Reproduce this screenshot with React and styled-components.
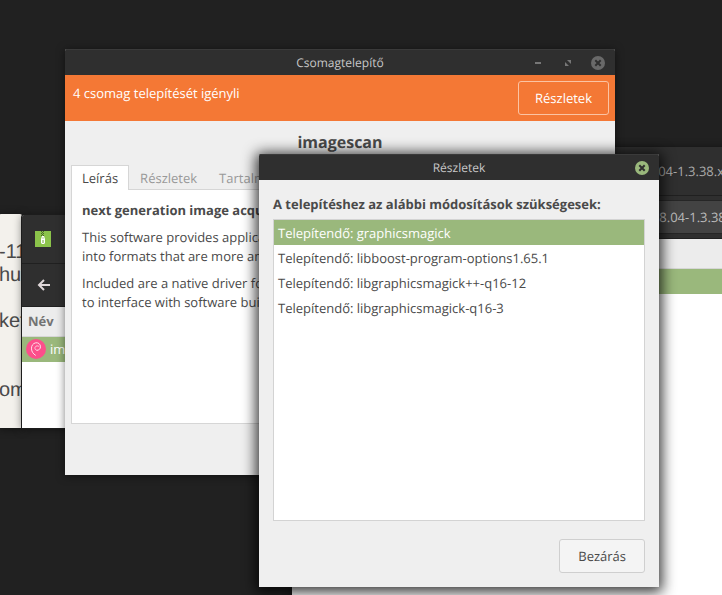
import React from "react";
import styled, { createGlobalStyle, css } from "styled-components";

const GlobalStyle = createGlobalStyle`
  * {
    box-sizing: border-box;
  }

  body {
    margin: 0;
    font-family: "Open Sans", "Noto Sans", sans-serif;
    font-size: 13px;
    line-height: 19px;
    text-rendering: geometricPrecision;
    color: #4a4a4a;
  }
`;

const Desktop = styled.main`
  position: relative;
  height: 100vh;
  overflow: hidden;
  background: #212121;
`;

const Window = styled.section`
  position: absolute;
  left: ${(props) => props.$x}px;
  top: ${(props) => props.$y}px;
  width: ${(props) => props.$width}px;
  height: ${(props) => props.$height}px;
  display: flex;
  flex-direction: column;
  overflow: hidden;
  border-radius: 2px 2px 0 0;
  background: ${(props) => props.$background || "#efefef"};
  box-shadow: ${(props) =>
    props.$active
      ? "0 2px 14px 3px rgba(0, 0, 0, 0.8)"
      : "0 1px 8px rgba(0, 0, 0, 0.5)"};
`;

const OutlinedWindow = styled(Window)`
  outline: 1px solid #1c1c1c;
`;

const PaperText = styled.p`
  margin: 0;
  padding: 27px 0 0;
  font-family: "Liberation Sans", Arial, sans-serif;
  font-size: 20px;
  line-height: 23px;
  white-space: pre;
`;

const TitleBar = styled.header`
  display: grid;
  grid-template-columns: 1fr auto 1fr;
  align-items: center;
  flex: none;
  height: 26px;
  padding: 0 10px;
  border-top: 1px solid #3a3a3a;
  background: #2f2f2f;
`;

const WindowTitle = styled.h1`
  grid-column: 2;
  margin: 0;
  font-size: 12px;
  font-weight: 400;
  color: #c8c8c8;
`;

const WindowControls = styled.div`
  display: flex;
  justify-content: flex-end;
  gap: 16px;
`;

const ControlButton = styled.button`
  display: flex;
  width: 14px;
  height: 14px;
  padding: 0;
  border: 0;
  background: none;
`;

const Notice = styled.div`
  display: flex;
  justify-content: space-between;
  align-items: flex-start;
  flex: none;
  height: 46px;
  padding: 6px;
  background: #f47835;
  color: #fff;
`;

const NoticeText = styled.span`
  padding: 3px 2px;
`;

const Button = styled.button`
  height: 34px;
  padding: 0 ${(props) => (props.$light ? 16 : 18)}px;
  border: 1px solid #cfcfcf;
  border-radius: 3px;
  background: #f4f4f4;
  font: inherit;
  text-rendering: inherit;
  color: #4a4a4a;

  ${(props) =>
    props.$light &&
    css`
      border-color: #fbc3a3;
      background: transparent;
      color: #fff;
    `}
`;

const PackageBody = styled.div`
  display: flex;
  flex-direction: column;
  flex: 1;
  padding: 10px 6px 51px;
`;

const PackageName = styled.h2`
  margin: 0 0 12px;
  font-size: 16px;
  line-height: 22px;
  text-align: center;
`;

const Tabs = styled.div`
  display: flex;
  flex: none;
  height: 24px;
`;

const Tab = styled.button`
  margin-bottom: -1px;
  padding: 0 10px;
  border: 1px solid ${(props) => (props.$active ? "#d6d6d6" : "transparent")};
  border-bottom: 0;
  background: ${(props) => (props.$active ? "#fff" : "none")};
  font: inherit;
  text-rendering: inherit;
  color: ${(props) => (props.$active ? "#4a4a4a" : "#999")};
  z-index: ${(props) => (props.$active ? 1 : 0)};
`;

const TabPanel = styled.div`
  flex: 1;
  padding: 11px 10px;
  border: 1px solid #d6d6d6;
  background: #fff;

  p {
    margin: 0 0 8px;
    white-space: pre;
  }
`;

const DialogBody = styled.div`
  display: flex;
  flex-direction: column;
  flex: 1;
  padding: 15px 14px 14px;
`;

const DialogHeading = styled.h2`
  margin: 0 0 5px;
  font-size: 13px;
  line-height: 19px;
`;

const ChangeList = styled.ul`
  flex: 1;
  margin: 0;
  padding: 0;
  border: 1px solid #d3d3d3;
  background: #fff;
  list-style: none;
`;

const ChangeItem = styled.li`
  padding: 4px 4px 2px;
  background: ${(props) => (props.$selected ? "#9ab87c" : "none")};
  color: ${(props) => (props.$selected ? "#fff" : "inherit")};
`;

const DialogActions = styled.div`
  display: flex;
  justify-content: flex-end;
  padding-top: 18px;
`;

const DarkBar = styled.div`
  display: flex;
  align-items: center;
  flex: none;
  height: ${(props) => props.$height}px;
  padding: 0 13px;
  border-bottom: 1px solid #202020;
  background: #2f2f2f;
  color: #aaa;
`;

const BackButton = styled.button`
  display: flex;
  padding: 0 2px;
  border: 0;
  background: none;
`;

const ArchiveTitle = styled.span`
  margin-left: auto;
  white-space: nowrap;
`;

const LocationBar = styled.div`
  flex: none;
  padding: 4px 0;
  border-bottom: 1px solid #202020;
  background: #2f2f2f;
`;

const LocationInput = styled.input`
  display: block;
  width: 100%;
  height: 34px;
  padding: 0;
  border: 1px solid #262626;
  background: #434343;
  font: inherit;
  text-rendering: inherit;
  text-align: right;
  color: #bbb;
`;

const FileTable = styled.table`
  width: 100%;
  border-collapse: collapse;

  th {
    height: 29px;
    padding: 0 6px;
    border-bottom: 1px solid #d6d6d6;
    background: #ececec;
    text-align: left;
    color: #737373;
  }

  td {
    height: 26px;
    padding: 0 4px;
    background: #9ab87c;
    color: #fff;
  }
`;

const FileName = styled.span`
  display: flex;
  align-items: center;
  gap: 4px;
`;

const changes = [
  "graphicsmagick",
  "libboost-program-options1.65.1",
  "libgraphicsmagick++-q16-12",
  "libgraphicsmagick-q16-3",
];

function CloseIcon({ fill, stroke }) {
  return (
    <svg width="14" height="14" viewBox="0 0 14 14">
      <circle cx="7" cy="7" r="7" fill={fill} />
      <path d="M4.3 4.3l5.4 5.4M9.7 4.3l-5.4 5.4" stroke={stroke} strokeWidth="2" />
    </svg>
  );
}

function MinimizeIcon() {
  return (
    <svg width="14" height="14" viewBox="0 0 14 14">
      <path d="M4 6h6v2H4z" fill="#777" />
    </svg>
  );
}

function MaximizeIcon() {
  return (
    <svg width="14" height="14" viewBox="0 0 14 14">
      <path d="M6 4h4v4zM4 6v4h4z" fill="#777" />
    </svg>
  );
}

function ArchiveIcon() {
  return (
    <svg width="16" height="16" viewBox="0 0 16 16">
      <rect width="16" height="16" fill="#8bc34a" />
      <path d="M6 0h1v1H6zM8 0h1v1H8zM7 1h1v1H7zM6 2h1v1H6zM8 2h1v1H8zM7 3h1v1H7zM6 4h1v1H6zM8 4h1v1H8z" fill="#46632a" />
      <path d="M7 5h2l1 3v4l-1 1H7l-1-1V8z" fill="#fff" />
      <path d="M7.5 6.5h1v1h-1zM7.5 9h1v3h-1z" fill="#6fa336" />
    </svg>
  );
}

function BackIcon() {
  return (
    <svg width="14" height="14" viewBox="0 0 14 14" fill="none">
      <path d="M7 2L2 7l5 5M2 7h11" stroke="#e0d8da" strokeWidth="2" />
    </svg>
  );
}

function DebianIcon() {
  return (
    <svg width="20" height="20" viewBox="0 0 20 20" fill="none">
      <circle cx="10" cy="10" r="10" fill="#fc4f8b" />
      <path
        d="M11 11.4C9.3 11.2 8.5 9.6 9.1 8.2c.7-1.5 2.8-1.9 4-.7"
        stroke="#ffe1eb"
        strokeWidth="0.8"
        strokeLinecap="round"
      />
      <path
        d="M11.2 11.3c1.7 0 3.3-1.5 3.3-3.5C14.5 5 12.2 3.4 9.7 3.8 7 4.3 5.2 6.8 5.5 9.9c.2 2.9 1.7 5 3.9 6.3"
        stroke="#ffe1eb"
        strokeWidth="1"
        strokeLinecap="round"
      />
    </svg>
  );
}

function PaperWindow() {
  return (
    <Window $x={-1} $y={214} $width={23} $height={214} $background="#f3f1ec">
      <PaperText>{"-11\nhu\n\nket\n\n\nom"}</PaperText>
    </Window>
  );
}

function PackageWindow() {
  return (
    <OutlinedWindow
      $x={22}
      $y={215}
      $width={200}
      $height={213}
      $background="#fff"
    >
      <DarkBar $height={49}>
        <ArchiveIcon />
      </DarkBar>
      <DarkBar $height={43}>
        <BackButton aria-label="Vissza">
          <BackIcon />
        </BackButton>
      </DarkBar>
      <FileTable>
        <thead>
          <tr>
            <th>Név</th>
          </tr>
        </thead>
        <tbody>
          <tr>
            <td>
              <FileName>
                <DebianIcon />
                imagescan
              </FileName>
            </td>
          </tr>
        </tbody>
      </FileTable>
    </OutlinedWindow>
  );
}

function ArchiveWindow() {
  return (
    <Window $x={292} $y={147} $width={445} $height={500} $background="#fff">
      <DarkBar $height={49}>
        <ArchiveTitle>18.04-1.3.38.x</ArchiveTitle>
      </DarkBar>
      <LocationBar>
        <LocationInput
          aria-label="Hely"
          defaultValue="18.04-1.3.38.x"
          readOnly
        />
      </LocationBar>
      <FileTable>
        <thead>
          <tr>
            <th aria-label="Név" />
          </tr>
        </thead>
        <tbody>
          <tr>
            <td />
          </tr>
        </tbody>
      </FileTable>
    </Window>
  );
}

function InstallerWindow() {
  return (
    <Window $x={65} $y={49} $width={550} $height={426}>
      <TitleBar>
        <WindowTitle>Csomagtelepítő</WindowTitle>
        <WindowControls>
          <ControlButton aria-label="Minimalizálás">
            <MinimizeIcon />
          </ControlButton>
          <ControlButton aria-label="Maximalizálás">
            <MaximizeIcon />
          </ControlButton>
          <ControlButton aria-label="Bezárás">
            <CloseIcon fill="#696969" stroke="#2f2f2f" />
          </ControlButton>
        </WindowControls>
      </TitleBar>
      <Notice>
        <NoticeText>4 csomag telepítését igényli</NoticeText>
        <Button $light>Részletek</Button>
      </Notice>
      <PackageBody>
        <PackageName>imagescan</PackageName>
        <Tabs role="tablist">
          <Tab role="tab" aria-selected="true" $active>
            Leírás
          </Tab>
          <Tab role="tab">Részletek</Tab>
          <Tab role="tab">Tartalmazott fájlok</Tab>
        </Tabs>
        <TabPanel role="tabpanel">
          <p>
            <b>next generation image acquisition</b>
          </p>
          <p>{"This software provides applications\ninto formats that are more am"}</p>
          <p>{"Included are a native driver for\nto interface with software built"}</p>
        </TabPanel>
      </PackageBody>
    </Window>
  );
}

function DetailsDialog() {
  return (
    <Window
      as="div"
      role="dialog"
      aria-label="Részletek"
      $x={259}
      $y={154}
      $width={400}
      $height={433}
      $active
    >
      <TitleBar>
        <WindowTitle>Részletek</WindowTitle>
        <WindowControls>
          <ControlButton aria-label="Bezárás">
            <CloseIcon fill="#9ab87c" stroke="#2f2f2f" />
          </ControlButton>
        </WindowControls>
      </TitleBar>
      <DialogBody>
        <DialogHeading>
          A telepítéshez az alábbi módosítások szükségesek:
        </DialogHeading>
        <ChangeList>
          {changes.map((name, index) => (
            <ChangeItem key={name} $selected={index === 0}>
              Telepítendő: {name}
            </ChangeItem>
          ))}
        </ChangeList>
        <DialogActions>
          <Button>Bezárás</Button>
        </DialogActions>
      </DialogBody>
    </Window>
  );
}

function App() {
  return (
    <>
      <GlobalStyle />
      <Desktop>
        <PaperWindow />
        <PackageWindow />
        <ArchiveWindow />
        <InstallerWindow />
        <DetailsDialog />
      </Desktop>
    </>
  );
}

export default App;
